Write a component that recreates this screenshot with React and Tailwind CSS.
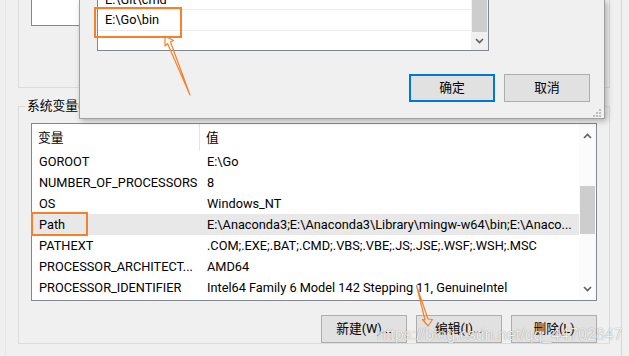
import React from "react";

function ChevUp() {
  return (
    <svg width="9" height="6" viewBox="0 0 9 6" className="block">
      <polyline points="1,5 4.5,1.5 8,5" fill="none" stroke="#606060" strokeWidth="1.6" />
    </svg>
  );
}
function ChevDown() {
  return (
    <svg width="9" height="6" viewBox="0 0 9 6" className="block">
      <polyline points="1,1 4.5,4.5 8,1" fill="none" stroke="#606060" strokeWidth="1.6" />
    </svg>
  );
}

function Btn({ children, primary }) {
  return (
    <div
      className={
        primary
          ? "w-[86px] h-[28px] flex items-center justify-center bg-[#e1e1e1] border-2 border-[#0078d7] leading-[16px]"
          : "w-[86px] h-[28px] flex items-center justify-center bg-[#e1e1e1] border border-[#adadad] leading-[16px]"
      }
    >
      {children}
    </div>
  );
}

const rows = [
  ["GOROOT", "E:\\Go"],
  ["NUMBER_OF_PROCESSORS", "8"],
  ["OS", "Windows_NT"],
  ["Path", "E:\\Anaconda3;E:\\Anaconda3\\Library\\mingw-w64\\bin;E:\\Anaco..."],
  ["PATHEXT", ".COM;.EXE;.BAT;.CMD;.VBS;.VBE;.JS;.JSE;.WSF;.WSH;.MSC"],
  ["PROCESSOR_ARCHITECT...", "AMD64"],
  ["PROCESSOR_IDENTIFIER", "Intel64 Family 6 Model 142 Stepping 11, GenuineIntel"],
];

export default function App() {
  return (
    <div className="relative w-[629px] h-[356px] overflow-hidden bg-[#f0f0f0] text-[12.75px] leading-[16px] text-black font-['Roboto','Noto_Sans_CJK_SC',sans-serif]">
      {/* main window */}
      <div className="flex h-full">
        <div className="ml-[5px] w-[617px] h-full border-l border-[#e6e6e6] border-r border-r-[#d6d6d6] pl-[12px] pr-[11px] flex flex-col">
          {/* user variables group */}
          <div className="h-[88px] shrink-0 border-l border-r border-b border-[#dcdcdc] px-[12px]">
            <div className="h-[26px] bg-white border-l border-r border-b border-[#828790]" />
          </div>

          {/* system variables group */}
          <fieldset className="mt-[10px] min-w-0 border border-[#dcdcdc] px-[12px] pt-[9px] pb-0 m-0">
            <legend className="ml-[-6px] px-[2px] h-[16px] leading-[16px]">系统变量(S)</legend>
            <div className="h-[178px] bg-white border border-[#828790] flex">
              <div className="flex-1 min-w-0 flex flex-col">
                <div className="h-[27px] shrink-0 flex items-stretch">
                  <div className="w-[168px] shrink-0 flex items-center pl-[6px] border-r border-[#e5e5e5]">变量</div>
                  <div className="flex-1 flex items-center pl-[6px]">值</div>
                </div>
                {rows.map(([k, v]) => (
                  <div
                    key={k}
                    className={
                      k === "Path"
                        ? "h-[21px] shrink-0 flex items-center bg-[#e8e8e8]"
                        : "h-[21px] shrink-0 flex items-center"
                    }
                  >
                    <div className="w-[168px] shrink-0 pl-[7px] whitespace-nowrap">{k}</div>
                    <div className="flex-1 min-w-0 pl-[7px] whitespace-nowrap">{v}</div>
                  </div>
                ))}
              </div>
              <div className="w-[17px] shrink-0 bg-[#fbfbfb] flex flex-col items-center">
                <div className="h-[24px] flex items-center justify-center">
                  <ChevUp />
                </div>
                <div className="h-[38px]" />
                <div className="w-[15px] h-[48px] bg-[#cdcdcd]" />
                <div className="flex-1" />
                <div className="h-[22px] flex items-center justify-center">
                  <ChevDown />
                </div>
              </div>
            </div>
            <div className="mt-[14px] flex justify-end gap-[9px]">
              <Btn>新建(W)...</Btn>
              <Btn>编辑(I)...</Btn>
              <Btn>删除(L)</Btn>
            </div>
          </fieldset>
        </div>
      </div>

      {/* edit dialog (window over content) */}
      <div className="absolute left-[79px] top-0 w-[526px] h-[119px] bg-[#f0f0f0] border-l border-r border-b border-[#a0a0a0] shadow-[2px_2px_6px_rgba(0,0,0,0.28)] flex flex-col">
        <div className="ml-[17px] w-[392px] h-[51px] shrink-0 bg-white border-l border-r border-b border-[#828790] flex overflow-hidden">
          <div className="flex-1 min-w-0 flex flex-col -mt-[9px]">
            <div className="h-[19px] shrink-0 flex items-center pl-[7px] border-b border-[#ebebeb]">E:\Git\cmd</div>
            <div className="h-[21px] shrink-0 flex items-center pl-[7px] border-b border-[#ebebeb]">E:\Go\bin</div>
          </div>
          <div className="w-[17px] shrink-0 bg-[#f0f0f0] flex flex-col items-center">
            <div className="w-[15px] h-[32px] bg-[#cdcdcd]" />
            <div className="flex-1 flex items-center justify-center">
              <ChevDown />
            </div>
          </div>
        </div>
        <div className="mt-[23px] flex justify-end gap-[9px] pr-[14px]">
          <Btn primary>确定</Btn>
          <Btn>取消</Btn>
        </div>
        <div className="flex justify-end pr-[3px] pt-[6px]">
          <svg width="9" height="9" viewBox="0 0 9 9" className="block">
            <rect x="7" y="1" width="2" height="2" fill="#bdbdbd" />
            <rect x="4" y="4" width="2" height="2" fill="#bdbdbd" />
            <rect x="7" y="4" width="2" height="2" fill="#bdbdbd" />
            <rect x="1" y="7" width="2" height="2" fill="#bdbdbd" />
            <rect x="4" y="7" width="2" height="2" fill="#bdbdbd" />
            <rect x="7" y="7" width="2" height="2" fill="#bdbdbd" />
          </svg>
        </div>
      </div>

      {/* annotations */}
      <div className="absolute left-[94px] top-[7px] w-[88px] h-[31px] border-2 border-[#f5822a]" />
      <div className="absolute left-[31px] top-[212px] w-[57px] h-[24px] border-2 border-[#f5822a]" />
      <svg className="absolute left-0 top-0" width="629" height="356" viewBox="0 0 629 356">
        <polygon
          points="165,36 173.5,40.5 170.5,42 190,95 167.5,43.5 165,46"
          fill="none"
          stroke="#f5822a"
          strokeWidth="1.2"
          strokeLinejoin="round"
        />
        <polygon
          points="428,326 422.5,319.5 425,320 416.5,285.5 428,319 432.5,319.5"
          fill="none"
          stroke="#f5822a"
          strokeWidth="1.2"
          strokeLinejoin="round"
        />
      </svg>

      {/* watermark */}
      <div className="absolute left-[377px] top-[325px] text-[16px] leading-[20px] text-[rgba(255,255,255,0.85)] font-['Liberation_Sans',sans-serif] [text-shadow:0_0_1px_rgba(0,0,0,0.45)]">
        https://blog.csdn.net/qq_44702847
      </div>
    </div>
  );
}
